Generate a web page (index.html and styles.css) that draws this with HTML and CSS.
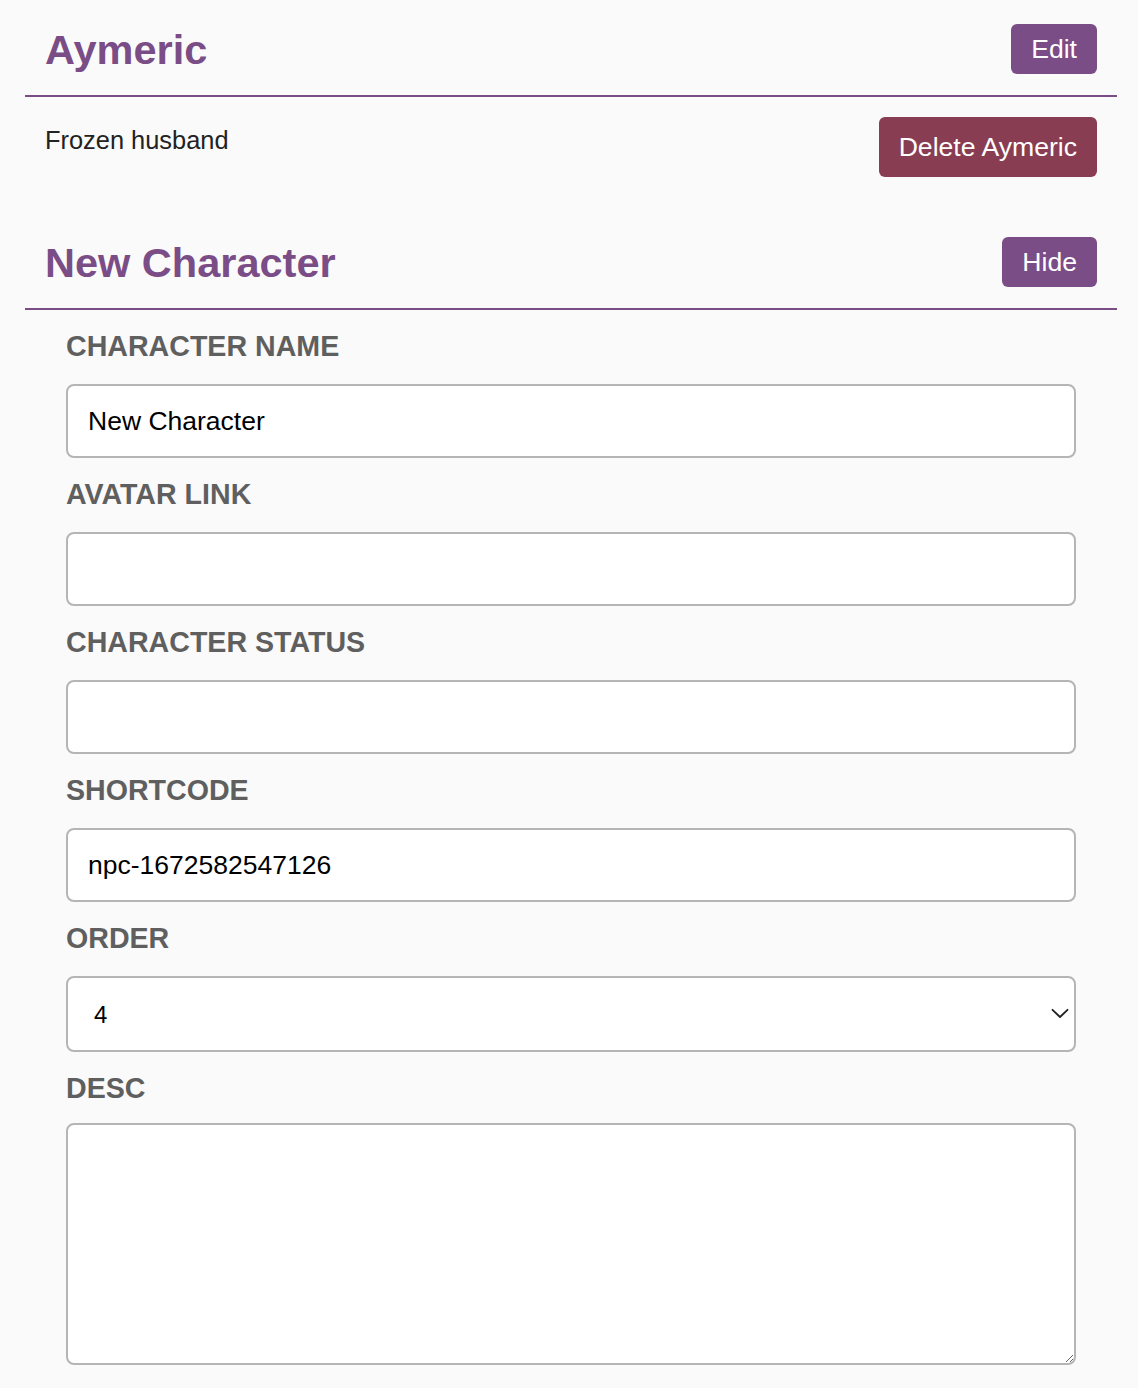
FILE: index.html
```html
<!DOCTYPE html>
<html lang="en">
<head>
<meta charset="utf-8">
<title>Characters</title>
<link rel="stylesheet" href="styles.css">
</head>
<body>
<div class="page">
  <section class="card">
    <header class="card-head">
      <h2 class="card-title">Aymeric</h2>
      <button class="btn btn-primary">Edit</button>
    </header>
    <div class="card-body">
      <p class="card-desc">Frozen husband</p>
      <button class="btn btn-danger">Delete Aymeric</button>
    </div>
  </section>

  <section class="card">
    <header class="card-head">
      <h2 class="card-title">New Character</h2>
      <button class="btn btn-primary">Hide</button>
    </header>
    <form class="form">
      <div class="field">
        <label class="field-label" for="name">Character Name</label>
        <input class="field-input" id="name" type="text" value="New Character">
      </div>
      <div class="field">
        <label class="field-label" for="avatar">Avatar Link</label>
        <input class="field-input" id="avatar" type="text" value="">
      </div>
      <div class="field">
        <label class="field-label" for="status">Character Status</label>
        <input class="field-input" id="status" type="text" value="">
      </div>
      <div class="field">
        <label class="field-label" for="shortcode">Shortcode</label>
        <input class="field-input" id="shortcode" type="text" value="npc-1672582547126">
      </div>
      <div class="field">
        <label class="field-label" for="order">Order</label>
        <div class="select-wrap">
          <select class="field-select" id="order">
            <option>1</option>
            <option>2</option>
            <option>3</option>
            <option selected>4</option>
          </select>
          <svg class="select-chevron" width="18" height="11" viewBox="0 0 18 11" aria-hidden="true">
            <path d="M1.5 1.8 L9 9 L16.5 1.8" fill="none" stroke="#222" stroke-width="1.8" stroke-linecap="round" stroke-linejoin="round"/>
          </svg>
        </div>
      </div>
      <div class="field field-textarea">
        <label class="field-label" for="desc">Desc</label>
        <textarea class="field-area" id="desc"></textarea>
      </div>
    </form>
  </section>
</div>
</body>
</html>
```

FILE: styles.css
```css
* {
  box-sizing: border-box;
}

html, body {
  margin: 0;
  padding: 0;
  background: #fafafa;
}

body {
  font-family: "Liberation Sans", Arial, Helvetica, sans-serif;
  color: #222;
}

.page {
  margin-left: 25px;
  width: 1092px;
}

.card-head {
  display: flex;
  justify-content: space-between;
  align-items: center;
  padding: 24px 20px 21px 20px;
  border-bottom: 2px solid #7b4d87;
}

.card-title {
  margin: 0;
  font-size: 41.5px;
  font-weight: 700;
  color: #7b4d87;
  line-height: 47px;
}

.btn {
  font-family: "Liberation Sans", Arial, Helvetica, sans-serif;
  font-size: 26.6px;
  line-height: 30px;
  color: #fff;
  border: 0;
  border-radius: 6px;
  padding: 10px 20px;
  cursor: pointer;
}

.btn-primary {
  background: #7b4d87;
}

.btn-danger {
  background: #883d52;
  padding: 15px 20px;
}

.card-body {
  display: flex;
  justify-content: space-between;
  align-items: flex-start;
  padding: 20px 20px 36px 20px;
}

.card-desc {
  margin: 9px 0 0 0;
  font-size: 25.4px;
  color: #222;
}

.form {
  padding: 20px 41px 0 41px;
}

.field {
  margin-bottom: 20px;
}

.field-label {
  display: block;
  font-size: 28.6px;
  line-height: 32px;
  font-weight: 700;
  color: #5f5f5f;
  text-transform: uppercase;
  margin-bottom: 22px;
}

.field-textarea .field-label {
  margin-bottom: 19px;
}

.field-input,
.field-select,
.field-area {
  display: block;
  width: 100%;
  background: #fff;
  border: 2px solid #b5b5b5;
  border-radius: 8px;
  font-family: "Liberation Sans", Arial, Helvetica, sans-serif;
  color: #000;
  margin: 0;
}

.field-input {
  height: 74px;
  padding: 0 20px;
  font-size: 26.5px;
}

.select-wrap {
  position: relative;
}

.field-select {
  height: 76px;
  padding: 0 26px;
  font-size: 24px;
  -webkit-appearance: none;
  appearance: none;
}

.select-chevron {
  position: absolute;
  right: 7px;
  top: 32px;
  pointer-events: none;
}

.field-area {
  height: 242px;
  padding: 16px 20px;
  font-size: 26px;
  resize: vertical;
}
```
